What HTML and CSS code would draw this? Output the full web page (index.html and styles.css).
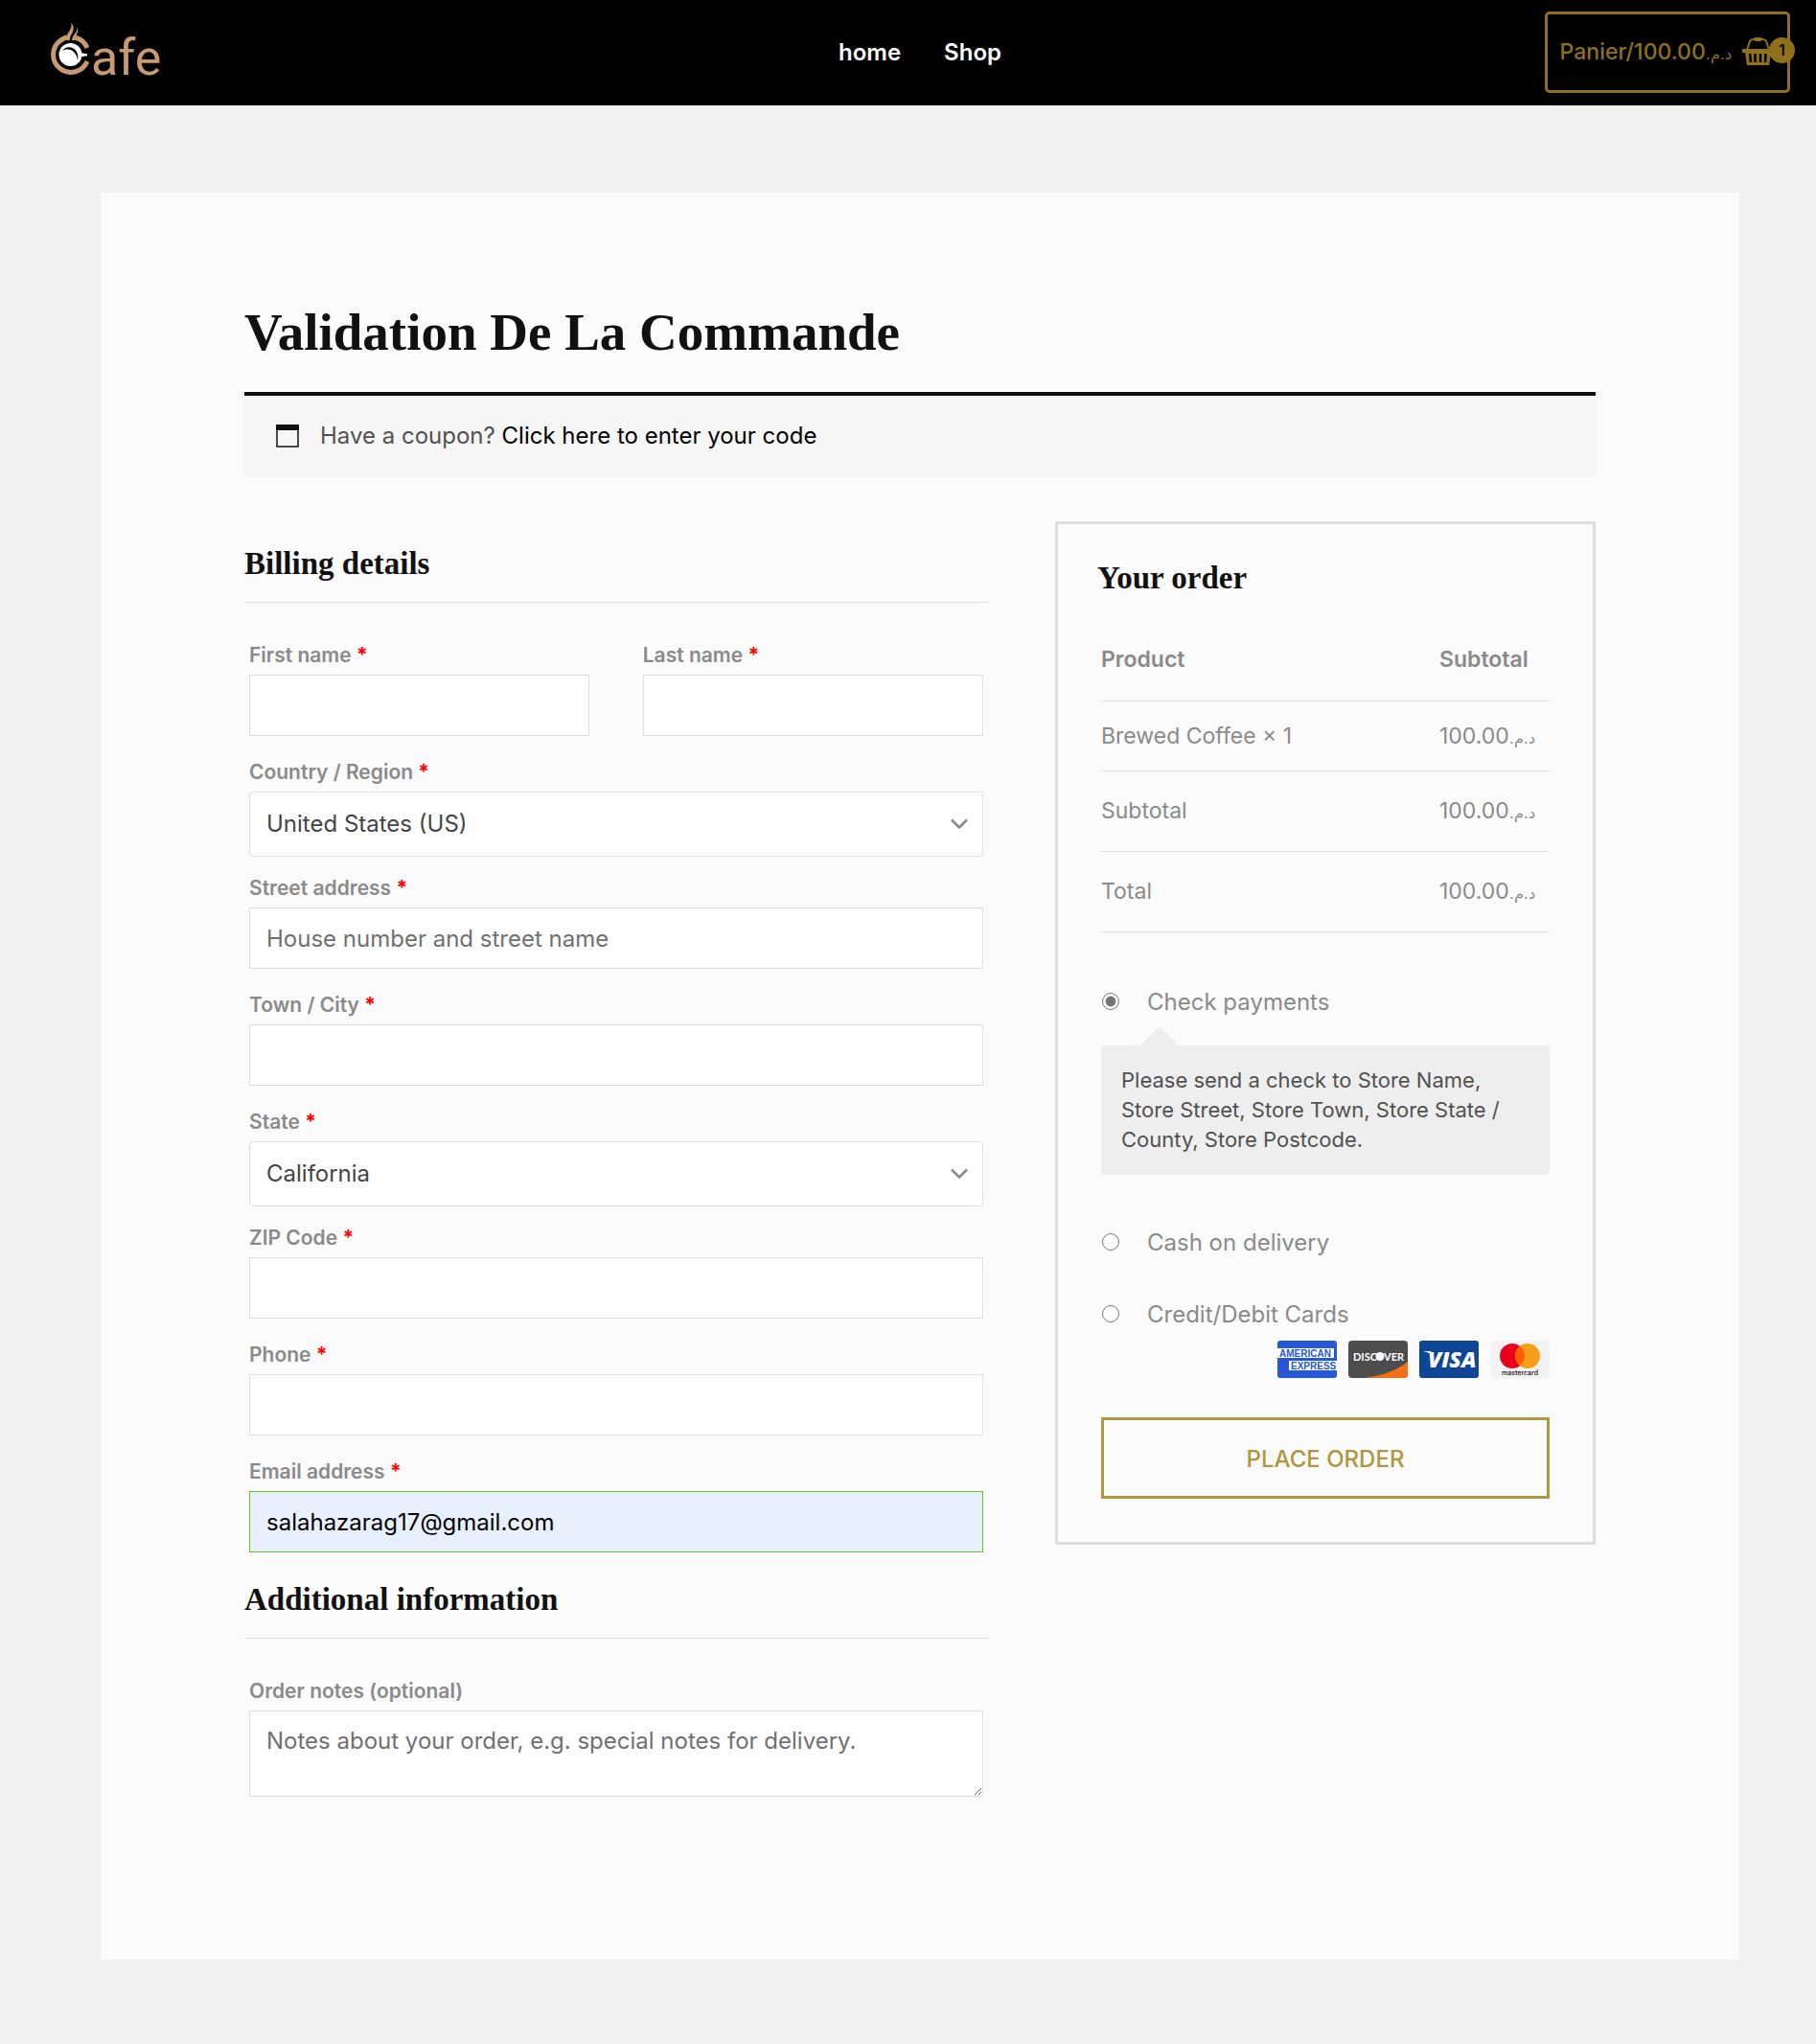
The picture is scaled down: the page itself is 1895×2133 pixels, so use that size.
FILE: index.html
```html
<!DOCTYPE html>
<html lang="fr">
<head>
<meta charset="utf-8">
<meta name="viewport" content="width=device-width, initial-scale=1">
<title>Validation De La Commande</title>
<link rel="stylesheet" href="styles.css">
</head>
<body>
<header class="site-header">
  <a class="logo" href="#" aria-label="Cafe">
    <svg width="120" height="65" viewBox="0 0 120 65">
      <path d="M39 28A18.400 18.400 0 1 0 39 42" fill="none" stroke="#c79a73" stroke-width="5"/>
      <path d="M17 22L18 12H27L25 22Z" fill="#000"/>
      <path d="M22 1C25 8 16 13 17 20L21 20C20 14 29 10 22 1ZM28 6C30 12 23 14 23 20L26 20C25 16 32 12 28 6Z" fill="#c79a73"/>
      <circle cx="21.500" cy="35" r="12" fill="#fff"/>
      <path d="M13 31C18 23 32 28 29 41C28 32 21 27 13 31Z" fill="#000"/>
      <path d="M31 33.500H35L36 34H39V36.500H36L35 37H31Z" fill="#fff"/>
      <text x="43" y="56" class="logo-text">afe</text>
    </svg>
  </a>
  <nav class="main-nav">
    <a href="#">home</a>
    <a href="#">Shop</a>
  </nav>
  <a class="cart" href="#">
    <span>Panier/100.00<span class="currency" dir="rtl">د.م.</span></span>
    <span class="cart-icon">
      <svg width="32" height="30" viewBox="0 0 32 30" fill="none" stroke="#8f711c">
        <path d="M5 13L8 4Q9 2 12 2H21Q24 2 25 4L28 13" stroke-width="2"/>
        <path d="M13 2H20" stroke-width="4"/>
        <path d="M0 12H32V16H30L28 29H5L3 16H0Z" fill="#8f711c" stroke="none"/>
        <path d="M8 17L9 26M13.500 17V26M19 17V26M24.500 17L24 26" stroke="#000" stroke-width="2.500"/>
      </svg>
      <span class="cart-count">1</span>
    </span>
  </a>
</header>

<main class="sheet">
  <h1>Validation De La Commande</h1>
  <div class="notice">
    <svg width="24" height="24" viewBox="0 0 24 24"><path d="M1 1H23V23H1Z" fill="none" stroke="#111" stroke-width="1.500"/><path d="M0 0H24V6H0Z" fill="#111"/></svg>
    <p>Have a coupon? <a href="#">Click here to enter your code</a></p>
  </div>

  <form class="checkout">
    <div class="details">
      <h3 class="section-title">Billing details</h3>
      <div class="fields">
        <div class="field-pair">
          <div class="field"><label for="first">First name <b class="req">*</b></label><input id="first" type="text"></div>
          <div class="field"><label for="last">Last name <b class="req">*</b></label><input id="last" type="text"></div>
        </div>
        <div class="field field-select">
          <label for="country">Country / Region <b class="req">*</b></label>
          <div class="select">
            <select id="country"><option>United States (US)</option></select>
            <svg width="18" height="12" viewBox="0 0 18 12"><path d="M1 1.500L9 9.500L17 1.500" fill="none" stroke="#888" stroke-width="2.500"/></svg>
          </div>
        </div>
        <div class="field"><label for="street">Street address <b class="req">*</b></label><input id="street" type="text" placeholder="House number and street name"></div>
        <div class="field"><label for="town">Town / City <b class="req">*</b></label><input id="town" type="text"></div>
        <div class="field field-select">
          <label for="state">State <b class="req">*</b></label>
          <div class="select">
            <select id="state"><option>California</option></select>
            <svg width="18" height="12" viewBox="0 0 18 12"><path d="M1 1.500L9 9.500L17 1.500" fill="none" stroke="#888" stroke-width="2.500"/></svg>
          </div>
        </div>
        <div class="field"><label for="zip">ZIP Code <b class="req">*</b></label><input id="zip" type="text"></div>
        <div class="field"><label for="phone">Phone <b class="req">*</b></label><input id="phone" type="tel"></div>
        <div class="field"><label for="email">Email address <b class="req">*</b></label><input id="email" class="filled" type="email" value="salahazarag17@gmail.com"></div>
      </div>
      <h3 class="section-title section-title-next">Additional information</h3>
      <div class="fields">
        <div class="field field-last"><label for="notes">Order notes (optional)</label><textarea id="notes" placeholder="Notes about your order, e.g. special notes for delivery."></textarea></div>
      </div>
    </div>

    <section class="order">
      <h3>Your order</h3>
      <div class="order-body">
        <table>
          <thead><tr><th>Product</th><th class="amount">Subtotal</th></tr></thead>
          <tbody><tr class="item"><td>Brewed Coffee × 1</td><td>100.00<span class="currency" dir="rtl">د.م.</span></td></tr></tbody>
          <tfoot>
            <tr><td>Subtotal</td><td>100.00<span class="currency" dir="rtl">د.م.</span></td></tr>
            <tr><td>Total</td><td>100.00<span class="currency" dir="rtl">د.م.</span></td></tr>
          </tfoot>
        </table>
        <div class="method"><input id="pay-check" type="radio" name="pay" checked><label for="pay-check">Check payments</label></div>
        <p class="method-note">Please send a check to Store Name, Store Street, Store Town, Store State / County, Store Postcode.</p>
        <div class="method"><input id="pay-cash" type="radio" name="pay"><label for="pay-cash">Cash on delivery</label></div>
        <div class="method method-cards"><input id="pay-card" type="radio" name="pay"><label for="pay-card">Credit/Debit Cards</label></div>
        <div class="cards">
          <svg width="62" height="39" viewBox="0 0 62 39" class="card-amex"><rect width="62" height="39" rx="3" fill="#2557d6"/><path d="M0 8H59V18H0ZM12 21H62V31H12Z" fill="#fff"/><text x="2" y="17">AMERICAN</text><text x="14" y="30">EXPRESS</text></svg>
          <svg width="62" height="39" viewBox="0 0 62 39" class="card-discover"><rect width="62" height="39" rx="4" fill="#4d4d4d"/><path d="M62 22V35Q62 39 58 39H17Q46 35 62 22Z" fill="#f47216"/><text x="5" y="21">DISC</text><circle cx="33" cy="16.500" r="4.500" fill="#fff"/><text x="37" y="21">VER</text></svg>
          <svg width="62" height="39" viewBox="0 0 62 39" class="card-visa"><rect width="62" height="39" rx="3" fill="#0e4595"/><path d="M4 11H12L15 16Q10 12 4 11Z" fill="#fff"/><text x="9" y="28">VISA</text></svg>
          <svg width="62" height="39" viewBox="0 0 62 39" class="card-mc"><rect width="62" height="39" rx="4" fill="#f3f3f3"/><circle cx="23" cy="16" r="13" fill="#eb001b"/><circle cx="39" cy="16" r="13" fill="#f79e1b"/><path d="M31 5.750A13 13 0 0 1 31 26.250A13 13 0 0 1 31 5.750Z" fill="#ff5f00"/><text x="31" y="36">mastercard</text></svg>
        </div>
        <button type="button" class="place-order">PLACE ORDER</button>
      </div>
    </section>
  </form>
</main>
</body>
</html>
```
FILE: styles.css
```css
* { box-sizing: border-box; }
body {
  margin: 0;
  background: #f0f0f0;
  color: #8a8a8a;
  font: 400 24px/40px Inter, "Noto Sans", sans-serif;
}
h1, h3, p { margin: 0; }
h1, h3 { font-family: "Liberation Serif", serif; font-weight: 700; color: #111; }
a { text-decoration: none; color: inherit; }
.currency { font-family: "DejaVu Sans", sans-serif; font-size: 16px; line-height: 1; }

.site-header {
  display: grid;
  grid-template-columns: 1fr auto 1fr;
  align-items: center;
  height: 110px;
  padding: 0 27px 1px 52px;
  background: #000;
}
.logo { display: flex; }
.logo svg { overflow: visible; }
.logo-text { font: 400 52px Roboto, sans-serif; fill: #c79a73; }
.main-nav { display: flex; gap: 45px; color: #fff; font-weight: 600; }
.cart {
  justify-self: end;
  display: flex;
  align-items: center;
  gap: 11px;
  height: 85px;
  padding: 0 15px 2px 13px;
  border: 3px solid #8f711c;
  border-radius: 5px;
  color: #8f711c;
  font-size: 23px;
  font-weight: 500;
}
.cart-icon { position: relative; display: flex; }
.cart-count {
  position: absolute;
  left: 28px;
  top: 0;
  width: 27px;
  height: 27px;
  border-radius: 50%;
  background: #8f711c;
  color: #000;
  font-size: 16px;
  line-height: 26px;
  text-align: center;
}

.sheet {
  margin: 91px 80px 90px 105px;
  padding: 116px 150px 170px;
  background: #fbfbfb;
}
h1 { font-size: 55px; line-height: 60px; }
.notice {
  display: flex;
  align-items: center;
  gap: 22px;
  height: 90px;
  margin-top: 32px;
  padding: 0 33px 2px;
  border-top: 4px solid #111;
  background: #f6f6f6;
  color: #515151;
}
.notice a { color: #000; }

.checkout {
  display: grid;
  grid-template-columns: 55% 40%;
  justify-content: space-between;
  align-items: start;
  margin-top: 45px;
}
h3 { font-size: 33px; line-height: 40px; }
.section-title { padding: 24px 0 20px; border-bottom: 1px solid #ddd; }
.section-title-next { padding-top: 6px; }
.fields { padding: 40px 5px 0; }
.field-pair { display: grid; grid-template-columns: 1fr 1fr; gap: 56px; }
.field { display: flex; flex-direction: column; gap: 5px; margin-bottom: 23px; }
.field-select { margin-bottom: 18px; }
.field-last { margin-bottom: 0; }
.field > label { font-size: 21px; line-height: 30px; font-weight: 600; }
.req { color: #f00; font-weight: 700; }
input[type="text"], input[type="tel"], input[type="email"], select, textarea {
  width: 100%;
  height: 64px;
  padding: 0 17px;
  border: 1px solid #ddd;
  border-radius: 0;
  background: #fff;
  color: #444;
  font: inherit;
}
input::placeholder, textarea::placeholder { color: #707070; }
input.filled { border-color: #69bf29; background: #e8f0fe; color: #000; }
.select { display: grid; align-items: center; }
.select > * { grid-area: 1 / 1; }
.select select { height: 68px; border-radius: 4px; appearance: none; }
.select svg { justify-self: end; margin-right: 16px; pointer-events: none; }
textarea { display: block; height: 90px; padding: 11px 17px; resize: vertical; }

.order { padding: 36px 41px 45px; border: 3px solid #ddd; }
.order-body { padding: 22px 4px 0; }
table { width: 100%; border-collapse: collapse; font-size: 23px; }
th, td { height: 84px; padding: 0; border-bottom: 1px solid #ddd; text-align: left; font-weight: 400; }
th { height: 86px; font-weight: 600; }
.item td { height: 73px; }
.amount { width: 115px; }
.method { display: flex; align-items: center; gap: 29px; }
table + .method { margin-top: 53px; }
.method input { width: 18px; height: 18px; margin: 0 0 2px 1px; accent-color: #757575; }
.method-note {
  position: relative;
  margin: 25px 0 51px;
  padding: 21px;
  border-radius: 3px;
  background: #eee;
  color: #515151;
  font-size: 22px;
  line-height: 31px;
}
.method-note::before {
  content: "";
  position: absolute;
  left: 41px;
  bottom: 100%;
  border: 20px solid transparent;
  border-top-width: 0;
  border-bottom-color: #eee;
}
.method-cards { margin-top: 35px; }
.cards { display: flex; justify-content: flex-end; gap: 12px; margin-top: 7px; }
.card-amex text { font: 700 10px "Liberation Sans", sans-serif; fill: #2557d6; }
.card-discover text { font: 700 11px Lato, sans-serif; fill: #fff; }
.card-visa text { font: italic 800 23px "Open Sans", sans-serif; fill: #fff; }
.card-mc text { font: 500 7px Inter, sans-serif; fill: #111; text-anchor: middle; }
.place-order {
  display: block;
  width: 100%;
  height: 85px;
  margin-top: 41px;
  padding: 4px 0 0;
  border: 3px solid #b0963f;
  background: transparent;
  color: #b0963f;
  font: inherit;
  font-weight: 500;
}
```
